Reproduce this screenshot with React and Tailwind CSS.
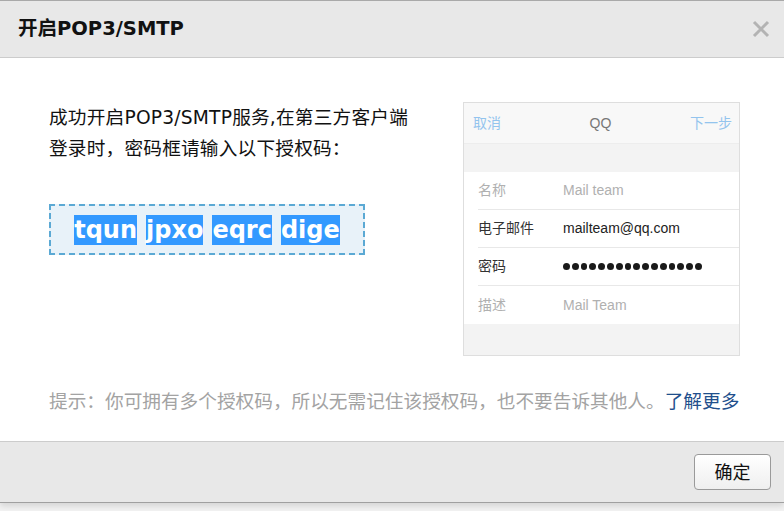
import React from 'react';

const FONT = "font-['DejaVu_Sans','Noto_Sans_CJK_SC',sans-serif]";

const rows = [
  { label: '名称', value: 'Mail team', dim: true },
  { label: '电子邮件', value: 'mailteam@qq.com', dim: false },
  { label: '密码', value: null, dim: false },
  { label: '描述', value: 'Mail Team', dim: true },
];

const PasswordDots = () => (
  <span className="flex gap-[2px]">
    {Array.from({ length: 16 }).map((_, i) => (
      <span key={i} className="w-[6.8px] h-[6.8px] rounded-full bg-[#1a1a1a]" />
    ))}
  </span>
);

const PhonePreview = () => (
  <div className="w-[277px] border border-[#dedede] bg-[#f4f4f4] font-['Liberation_Sans','Noto_Sans_CJK_SC',sans-serif]">
    {/* Nav bar */}
    <div className="h-[41px] flex items-center justify-between pl-[9px] pr-[7px] bg-[#f8f8f8] border-b border-[#ededed] text-[14px]">
      <span className="text-[#93c4ee]">取消</span>
      <span className="text-[#777] pl-[10px]">QQ</span>
      <span className="text-[#93c4ee]">下一步</span>
    </div>
    <div className="h-[28px] bg-[#f3f3f3]" />
    {/* Form rows */}
    <div className="bg-white pl-[14px]">
      {rows.map((r, i) => (
        <div
          key={r.label}
          className={`h-[38px] flex items-center text-[14px] ${i < rows.length - 1 ? 'border-b border-[#e8e8e8]' : ''}`}
        >
          <span className={`w-[85px] ${r.dim ? 'text-[#b0b0b0]' : 'text-[#333]'}`}>{r.label}</span>
          {r.value ? (
            <span className={r.dim ? 'text-[#b0b0b0]' : 'text-[#222]'}>{r.value}</span>
          ) : (
            <PasswordDots />
          )}
        </div>
      ))}
    </div>
    <div className="h-[31px] bg-[#f3f3f3]" />
  </div>
);

export default function App() {
  const code = ['tqun', 'jpxo', 'eqrc', 'dige'];

  return (
    <div className={`w-[784px] h-[511px] bg-[#f2f2f2] ${FONT}`}>
      <div className="bg-white border-t border-[#a9a9a9] border-b border-b-[#a0a0a0] shadow-[0_3px_6px_rgba(0,0,0,0.12)]">
        {/* Header */}
        <div className="h-[57px] bg-[#e8e8e8] border-b border-[#cccccc] flex items-center justify-between pl-[18px] pr-[14px]">
          <h3 className="text-[19.5px] font-bold text-[#111]">开启POP3/SMTP</h3>
          <button className="w-[18px] h-[18px] flex items-center justify-center" type="button">
            <svg width="18" height="18" viewBox="0 0 18 18">
              <path d="M2 2L16 16M16 2L2 16" stroke="#b3b3b3" strokeWidth="3" strokeLinecap="butt" />
            </svg>
          </button>
        </div>

        {/* Body */}
        <div className="h-[383px] pt-[44px] pl-[49px] pr-[44px]">
          <div className="flex justify-between">
            <div>
              <p className="text-[18.67px] leading-[31px] tracking-[0.2px] text-[#111] whitespace-nowrap">
                成功开启POP3/SMTP服务,在第三方客户端
                <br />
                登录时，密码框请输入以下授权码：
              </p>
              <div className="mt-[40px] w-[316px] h-[51px] border-2 border-dashed border-[#5ba9d4] bg-[#e8f2f9] flex items-center justify-center">
                <div className="flex gap-[9px] text-[24px] leading-[30px] font-bold text-white whitespace-nowrap">
                  {code.map((w) => (
                    <span key={w} className="bg-[#3399ff]">{w}</span>
                  ))}
                </div>
              </div>
            </div>
            <PhonePreview />
          </div>

          <p className="mt-[30px] text-[18.67px] leading-[31px] text-[#a3a3a3] whitespace-nowrap">
            提示：你可拥有多个授权码，所以无需记住该授权码，也不要告诉其他人。
            <a href="#" className="text-[#1f4f8c]">了解更多</a>
          </p>
        </div>

        {/* Footer */}
        <div className="h-[61px] bg-[#e8e8e8] border-t border-[#cccccc] flex items-center justify-end pr-[13px]">
          <button
            type="button"
            className="w-[77px] h-[36px] rounded-[4px] border border-[#9a9a9a] bg-gradient-to-b from-white to-[#efefef] text-[18px] text-[#111]"
          >
            确定
          </button>
        </div>
      </div>
    </div>
  );
}
